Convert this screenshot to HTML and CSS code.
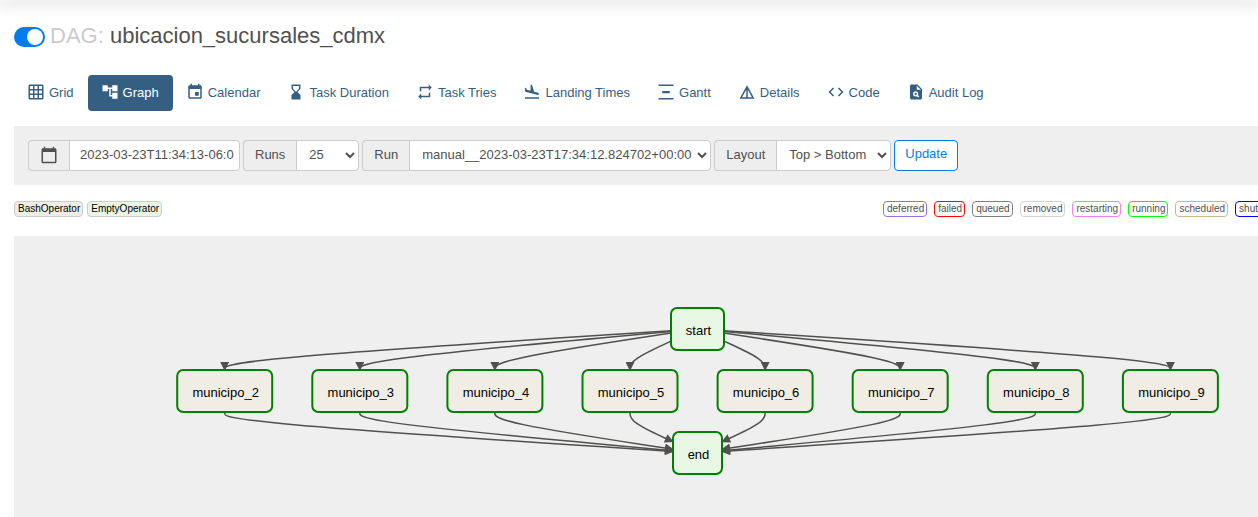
FILE: index.html
```html
<!DOCTYPE html>
<html lang="en">
<head>
<meta charset="utf-8">
<title>ubicacion_sucursales_cdmx - Graph</title>
<link rel="stylesheet" href="styles.css">
</head>
<body>
<div class="topbar"></div>
<main class="page">
  <div class="title-row">
    <label class="switch"><input type="checkbox" class="switch-input" checked aria-label="Pause or unpause DAG"><span class="switch-track"></span></label>
    <h1 class="title"><span class="title-prefix">DAG:</span> ubicacion_sucursales_cdmx</h1>
  </div>

  <nav class="tabs">
    <a class="tab" href="#grid"><svg class="icon" viewBox="0 0 24 24"><path d="M20 2H4c-1.1 0-2 .9-2 2v16c0 1.1.9 2 2 2h16c1.1 0 2-.9 2-2V4c0-1.1-.9-2-2-2zM8 20H4v-4h4v4zm0-6H4v-4h4v4zm0-6H4V4h4v4zm6 12h-4v-4h4v4zm0-6h-4v-4h4v4zm0-6h-4V4h4v4zm6 12h-4v-4h4v4zm0-6h-4v-4h4v4zm0-6h-4V4h4v4z"/></svg>Grid</a>
    <a class="tab tab-active" href="#graph"><svg class="icon" viewBox="0 0 24 24"><path d="M22 11V3h-7v3H9V3H2v8h7V8h2v10h4v3h7v-8h-7v3h-2V8h2v3z"/></svg>Graph</a>
    <a class="tab" href="#calendar"><svg class="icon" viewBox="0 0 24 24"><path d="M17 12h-5v5h5v-5zM16 1v2H8V1H6v2H5c-1.11 0-1.99.9-1.99 2L3 19c0 1.1.89 2 2 2h14c1.1 0 2-.9 2-2V5c0-1.1-.9-2-2-2h-1V1h-2zm3 18H5V8h14v11z"/></svg>Calendar</a>
    <a class="tab" href="#duration"><svg class="icon" viewBox="0 0 24 24"><path d="M18 22l-.01-6L14 12l3.99-4.01L18 2H6v6l4 4-4 3.99V22h12zM8 7.5V4h8v3.5l-4 4-4-4z"/></svg>Task Duration</a>
    <a class="tab" href="#tries"><svg class="icon" viewBox="0 0 24 24"><path d="M7 7h10v3l4-4-4-4v3H5v6h2V7zm10 10H7v-3l-4 4 4 4v-3h12v-6h-2v4z"/></svg>Task Tries</a>
    <a class="tab" href="#landing"><svg class="icon" viewBox="0 0 24 24"><path d="M2.5 19h19v2h-19zm7.18-5.73l4.35 1.16 5.31 1.42c.8.21 1.62-.26 1.84-1.06.21-.8-.26-1.62-1.06-1.84l-5.31-1.42-2.76-9.02L10.12 2v8.28L5.15 8.95l-.93-2.32-1.45-.39v5.17l1.6.43 5.31 1.43z"/></svg>Landing Times</a>
    <a class="tab" href="#gantt"><svg class="icon" viewBox="0 0 24 24"><path d="M22 2v2H2V2h20zM7 10.5v3h10v-3H7zM2 20v2h20v-2H2z"/></svg>Gantt</a>
    <a class="tab" href="#details"><svg class="icon" viewBox="0 0 24 24"><path d="M12 3L2 21h20L12 3zm1 5.92L18.6 19H13V8.92zm-2 0V19H5.4L11 8.92z"/></svg>Details</a>
    <a class="tab" href="#code"><svg class="icon" viewBox="0 0 24 24"><path d="M9.4 16.6L4.8 12l4.6-4.6L8 6l-6 6 6 6 1.4-1.4zm5.2 0l4.6-4.6-4.6-4.6L16 6l6 6-6 6-1.4-1.4z"/></svg>Code</a>
    <a class="tab" href="#audit"><svg class="icon" viewBox="0 0 24 24"><path fill-rule="evenodd" d="M14 2H6c-1.1 0-1.99.9-1.99 2L4 20c0 1.1.89 2 1.99 2H18c1.1 0 2-.9 2-2V8l-6-6zm1.04 17.45l-1.88-1.88c-1.33.71-3.01.53-4.13-.59-1.37-1.37-1.37-3.58 0-4.95 1.37-1.37 3.58-1.37 4.95 0 1.12 1.12 1.31 2.8.59 4.13l1.88 1.88-1.41 1.41zM13 9V3.5L18.5 9H13zM10 14.5a1.5 1.5 0 1 0 3 0a1.5 1.5 0 1 0-3 0z"/></svg>Audit Log</a>
  </nav>

  <form class="filters">
    <div class="group">
      <label class="addon" for="base-date"><svg class="icon icon-date" viewBox="0 0 24 24" role="img" aria-label="Base date"><path d="M20 3h-1V1h-2v2H7V1H5v2H4c-1.1 0-2 .9-2 2v16c0 1.1.9 2 2 2h16c1.1 0 2-.9 2-2V5c0-1.1-.9-2-2-2zm0 18H4V8h16v13z"/></svg></label>
      <input class="control control-date" id="base-date" type="text" value="2023-03-23T11:34:13-06:0">
    </div>
    <div class="group">
      <label class="addon" for="runs">Runs</label>
      <select class="control control-runs" id="runs"><option>25</option></select>
    </div>
    <div class="group">
      <label class="addon" for="run">Run</label>
      <select class="control control-run" id="run"><option>manual__2023-03-23T17:34:12.824702+00:00</option></select>
    </div>
    <div class="group">
      <label class="addon" for="layout">Layout</label>
      <select class="control control-layout" id="layout"><option>Top &gt; Bottom</option></select>
    </div>
    <button class="update" type="button">Update</button>
  </form>

  <div class="legend">
    <div class="operators">
      <span class="tag tag-bash">BashOperator</span>
      <span class="tag tag-empty">EmptyOperator</span>
    </div>
    <div class="states">
      <span class="tag state-deferred">deferred</span>
      <span class="tag state-failed">failed</span>
      <span class="tag state-queued">queued</span>
      <span class="tag state-removed">removed</span>
      <span class="tag state-restarting">restarting</span>
      <span class="tag state-running">running</span>
      <span class="tag state-scheduled">scheduled</span>
      <span class="tag state-shutdown">shutdown</span>
    </div>
  </div>

  <section class="canvas">
    <svg class="graph" id="graph">
      <defs>
        <marker id="arrow" viewBox="0 0 10 10" refX="9" refY="5" markerWidth="8" markerHeight="6" orient="auto"><path class="arrowhead" d="M0 0L10 5L0 10z"/></marker>
      </defs>
    </svg>
  </section>
</main>
<script src="graph.js"></script>
</body>
</html>
```
FILE: styles.css
```css
* { box-sizing: border-box; }

body {
  margin: 0;
  min-height: 100vh;
  display: flex;
  flex-direction: column;
  overflow: hidden;
  background: #fff;
  color: #51504f;
  font-family: "Liberation Sans", Arial, sans-serif;
  font-size: 13px;
}

.topbar { box-shadow: 0 0 16px 3px rgba(0, 0, 0, 0.2); }

.page {
  flex: 1;
  display: flex;
  flex-direction: column;
  padding: 22px 0 0 14px;
}

.title-row { display: flex; align-items: center; gap: 5px; }
.title { margin: 0; font-size: 22px; line-height: 28px; font-weight: 400; white-space: nowrap; }
.title-prefix { color: #cbcbcb; }

.switch { display: flex; padding-top: 2px; }
.switch-input { position: absolute; opacity: 0; }
.switch-track {
  display: flex;
  width: 31px;
  height: 20px;
  padding: 2px;
  border-radius: 10px;
  background: #017cee;
  justify-content: flex-end;
}
.switch-track::after { content: ""; width: 16px; height: 16px; border-radius: 8px; background: #fff; }

.tabs { display: flex; margin-top: 25px; }
.tab {
  display: flex;
  align-items: center;
  gap: 4px;
  height: 36px;
  padding: 0 14px 2px 13px;
  border-radius: 4px;
  color: #355f82;
  text-decoration: none;
  white-space: nowrap;
}
.tab-active { background: #355f82; color: #fff; }
.icon { width: 18px; height: 18px; fill: currentColor; flex: none; }

.filters { display: flex; gap: 3px; margin-top: 15px; padding: 14px; background: #efefef; }
.group { display: flex; height: 31px; }
.addon {
  display: flex;
  align-items: center;
  padding: 0 11px 2px;
  border: 1px solid #ccc;
  border-right: 0;
  border-radius: 4px 0 0 4px;
  background: #eee;
}
.control {
  height: 31px;
  padding-bottom: 3px;
  border: 1px solid #ccc;
  border-radius: 0 4px 4px 0;
  background: #fff;
  color: #51504f;
  font: inherit;
}
.control-date { width: 171px; padding-left: 10px; padding-right: 4px; }
.control-runs { width: 63px; padding-left: 8px; }
.control-run { width: 302px; padding-left: 8px; }
.control-layout { width: 115px; padding-left: 8px; }
.update {
  height: 31px;
  padding: 0 10px 4px;
  border: 1px solid #017cee;
  border-radius: 4px;
  background: #fff;
  color: #017cee;
  font: inherit;
}

.legend { display: flex; justify-content: space-between; margin-top: 16px; }
.operators { display: flex; gap: 4px; }
.states { display: flex; flex: 0 0 375px; gap: 7px; overflow: hidden; }
.tag {
  height: 16px;
  padding: 0 2px 0 3px;
  border: 1px solid #ccc;
  border-radius: 4px;
  font-size: 10px;
  line-height: 14px;
}
.tag-bash { background: #f0ede4; color: #000; }
.tag-empty { background: #e8f7e4; color: #000; }
.state-deferred { border-color: mediumpurple; }
.state-failed { border-color: red; }
.state-queued { border-color: gray; }
.state-removed { border-color: lightgrey; }
.state-restarting { border-color: violet; }
.state-running { border-color: lime; }
.state-scheduled { border-color: tan; }
.state-shutdown { border-color: blue; }

.canvas { flex: 1; display: flex; margin-top: 19px; background: #efefef; }
.graph { flex: 1; }
.edge { fill: none; stroke: #51504f; stroke-width: 1.5px; }
.arrowhead { fill: #51504f; }
.node-box { stroke: #008000; stroke-width: 2px; }
.node-bash { fill: #f0ede4; }
.node-empty { fill: #e8f7e4; }
.node-label { fill: #000; font-size: 13px; }
```
FILE: graph.js
```js
const svg = document.getElementById("graph");
const HEIGHT = 42;
const RANK_GAP = 20;

function add(tag, attrs, text) {
  const el = document.createElementNS("http://www.w3.org/2000/svg", tag);
  for (const key in attrs) el.setAttribute(key, attrs[key]);
  if (text) el.textContent = text;
  svg.appendChild(el);
}

const start = { name: "start", kind: "empty", x: 683.5, y: 93, width: 53 };
const end = { name: "end", kind: "empty", x: 683.5, y: 217, width: 49 };
const tasks = [2, 3, 4, 5, 6, 7, 8, 9].map((n, i) => ({
  name: "municipo_" + n, kind: "bash", x: 210.7 + 135.1 * i, y: 155, width: 95
}));

// Point where the line from a node's centre to p crosses the node's border.
function border(node, p) {
  const dx = p[0] - node.x, dy = p[1] - node.y;
  const t = Math.min(node.width / 2 / Math.abs(dx), HEIGHT / 2 / Math.abs(dy));
  return [node.x + dx * t, node.y + dy * t];
}

// B-spline through three control points.
function edge(a, b, c) {
  const mix = (i, j, k) => [0, 1].map(d => (i * a[d] + j * b[d] + k * c[d]) / 6).join(" ");
  add("path", {
    class: "edge",
    "marker-end": "url(#arrow)",
    d: `M${mix(6, 0, 0)}L${mix(5, 1, 0)}C${mix(4, 2, 0)} ${mix(2, 4, 0)} ${mix(1, 4, 1)}` +
       `C${mix(0, 4, 2)} ${mix(0, 2, 4)} ${mix(0, 1, 5)}L${mix(0, 0, 6)}`
  });
}

for (const task of tasks) {
  const top = task.y - HEIGHT / 2, bottom = task.y + HEIGHT / 2;
  const above = [task.x, top - RANK_GAP / 2], below = [task.x, bottom + RANK_GAP / 2];
  edge(border(start, above), above, [task.x, top]);
  edge([task.x, bottom], below, border(end, below));
}

for (const node of [start, ...tasks, end]) {
  add("rect", {
    class: "node-box node-" + node.kind,
    x: node.x - node.width / 2, y: node.y - HEIGHT / 2,
    width: node.width, height: HEIGHT, rx: 6
  });
  add("text", { class: "node-label", x: node.x + 1, y: node.y + 6, "text-anchor": "middle" }, node.name);
}
```
